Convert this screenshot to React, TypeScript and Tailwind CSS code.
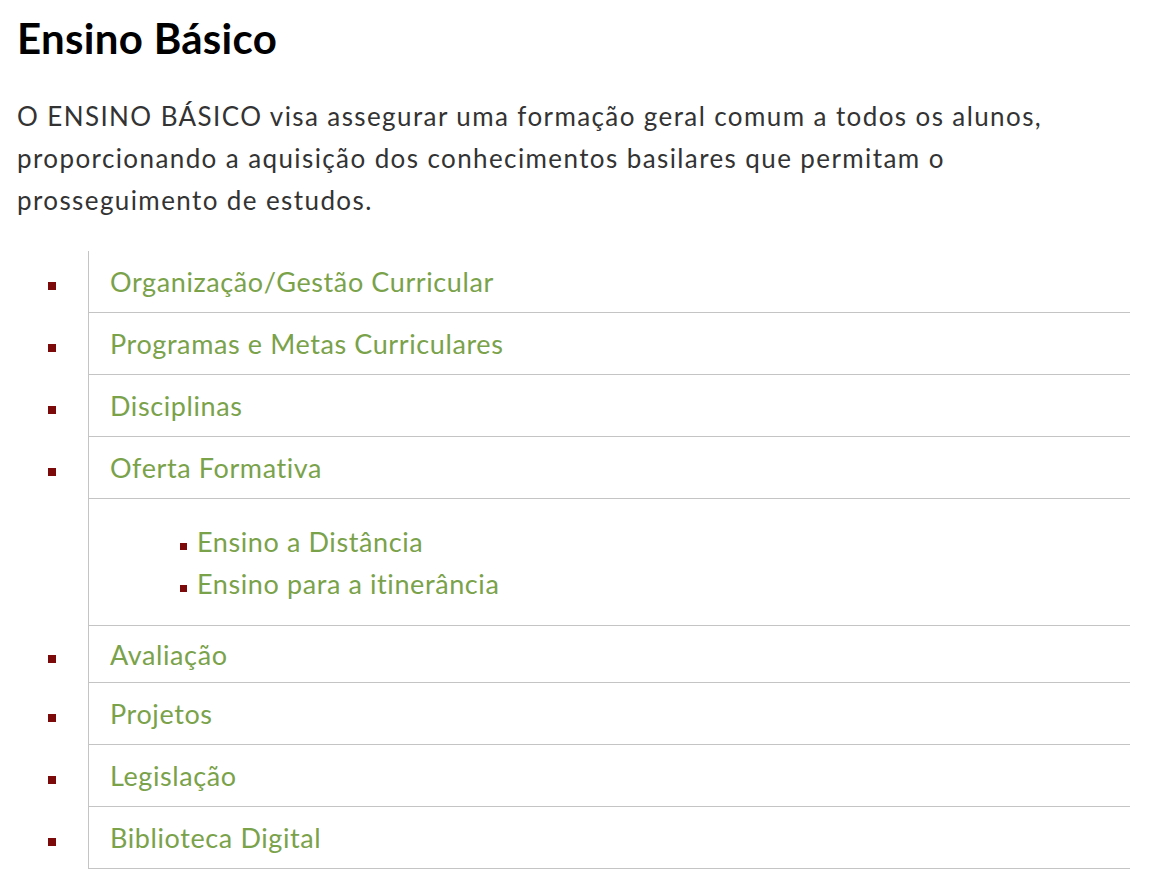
import React from 'react';

type Item = { label: string; children?: string[]; h?: string };

const items: Item[] = [
  { label: 'Organização/Gestão Curricular' },
  { label: 'Programas e Metas Curriculares' },
  { label: 'Disciplinas' },
  { label: 'Oferta Formativa', children: ['Ensino a Distância', 'Ensino para a itinerância'] },
  { label: 'Avaliação', h: 'h-[57px]' },
  { label: 'Projetos' },
  { label: 'Legislação' },
  { label: 'Biblioteca Digital' },
];

const Bullet = ({ className = '' }: { className?: string }) => (
  <span className={`inline-block w-2 h-2 bg-[#7d0a0a] ${className}`} />
);

export default function App() {
  return (
    <div className="bg-white min-h-screen px-[17px] pt-[14px] font-['Lato','Noto_Sans',sans-serif] text-[#333]">
      <h1 className="text-[42px] font-bold leading-[48px] tracking-[0.3px] text-black">Ensino Básico</h1>
      <p className="mt-[33px] max-w-[1080px] text-[26px] leading-[42px] tracking-[1.4px]">
        O ENSINO BÁSICO visa assegurar uma formação geral comum a todos os alunos, proporcionando a
        aquisição dos conhecimentos basilares que permitam o prosseguimento de estudos.
      </p>
      <ul className="mt-[30px] w-[1113px]">
        {items.map((it) => (
          <React.Fragment key={it.label}>
            <li className="flex">
              <div className="w-[71px] shrink-0 flex items-center pl-[31px] pt-[8px]">
                <Bullet />
              </div>
              <div
                className={`flex-1 border-l border-b border-[#c4c4c4] ${it.h ?? 'h-[62px]'} flex items-center pl-[21px] pt-[2px] text-[27px] tracking-[0.6px] text-[#7aa24a]`}
              >
                {it.label}
              </div>
            </li>
            {it.children && (
              <li className="flex">
                <div className="w-[71px] shrink-0" />
                <ul className="flex-1 border-l border-b border-[#c4c4c4] h-[127px] pl-[91px] pt-[22px]">
                  {it.children.map((c) => (
                    <li key={c} className="flex items-center h-[42px] text-[27px] tracking-[0.6px] text-[#7aa24a]">
                      <Bullet className="w-[7px] h-[7px] mr-[10px] mt-[8px]" />
                      {c}
                    </li>
                  ))}
                </ul>
              </li>
            )}
          </React.Fragment>
        ))}
      </ul>
    </div>
  );
}
